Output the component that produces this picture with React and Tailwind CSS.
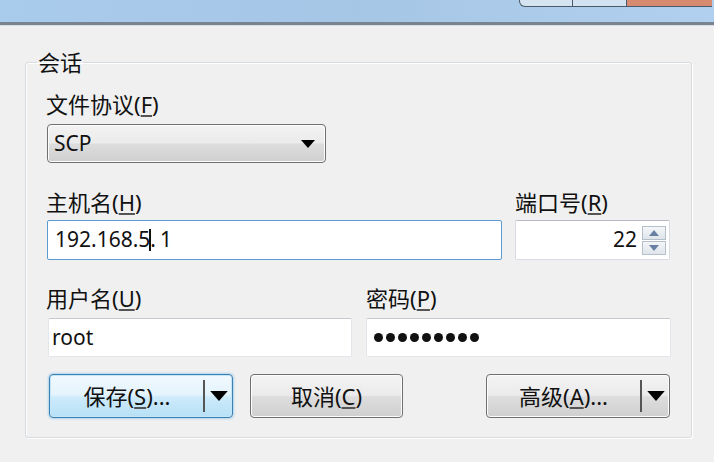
import React from "react";

const font = { fontFamily: "'Noto Sans', 'Noto Sans CJK SC', sans-serif" };

const Key = ({ k }) => (
	<span>
		(<span className="underline underline-offset-2 decoration-[#555]">{k}</span>)
	</span>
);

const Label = ({ text, k }) => (
	<div className="h-[26px] leading-[26px] text-[22px] text-[#111] whitespace-nowrap">
		{text}
		<Key k={k} />
	</div>
);

const Tri = ({ cls }) => (
	<svg className={cls} viewBox="0 0 14 8">
		<path d="M0 0 H14 L7 8 Z" fill="#000" />
	</svg>
);

const btnGray =
	"border border-[#707070] rounded-[4px] bg-[linear-gradient(#f3f3f3_0%,#ebebeb_48%,#dddddd_52%,#cfcfcf_100%)] shadow-[inset_0_0_0_1px_#fcfcfc]";
const btnBlue =
	"border border-[#3c7fb1] rounded-[4px] bg-[linear-gradient(#f1f9fe_0%,#e3f3fc_48%,#cdebfb_52%,#b7e0f6_100%)] shadow-[inset_0_0_0_1px_#c5e5f8,0_0_3px_#6ab7e8]";

const App = () => {
	return (
		<div className="w-[714px] h-[462px] overflow-hidden bg-[#f0f0f0] flex flex-col" style={font}>
			{/* title bar */}
			<div className="h-[22px] bg-[linear-gradient(90deg,#a9cbec,#a6c6e6_50%,#b1d0ef)] flex justify-end">
				<div className="flex h-[7px] mr-[2px]">
					<div className="w-[54px] border border-t-0 border-[#4a5a6a] rounded-bl-[6px] bg-[#d6e4f2]" />
					<div className="w-[53px] border-b border-[#4a5a6a] bg-[#d3e2f1]" />
					<div className="w-[86px] border-b border-l border-[#4a5a6a] bg-[#d88a70]" />
				</div>
			</div>
			<div className="h-[3px] bg-[#7a8490]" />
			<div className="h-[1px] bg-[#d8dde2]" />

			{/* group */}
			<fieldset className="ml-[25px] mt-[24px] w-[667px] h-[388px] border border-[#d5dbdf] rounded-[3px] shadow-[inset_1px_1px_0_#ffffff,1px_1px_0_#ffffff] pl-[20px] pr-[20px]">
				<legend className="ml-[-9px] px-[1px] h-[24px] leading-[24px] text-[22px] text-[#111]">会话</legend>

				<div className="mt-[17px]">
					<Label text="文件协议" k="F" />
				</div>
				<div className={`mt-[7px] ml-[1px] w-[279px] h-[39px] flex items-center justify-between pl-[6px] pr-[10px] ${btnGray}`}>
					<span className="text-[21px] text-[#111]">SCP</span>
					<Tri cls="w-[14px] h-[8px]" />
				</div>

				<div className="mt-[26px] flex">
					<div className="w-[469px]">
						<Label text="主机名" k="H" />
						<div className="mt-[5px] ml-[1px] w-[455px] h-[40px] bg-white border border-[#5b9bd2] rounded-[2px] flex items-center pl-[7px] text-[21px] text-[#111]">
							192.168.5
							<span className="inline-block w-[2px] h-[22px] bg-[#111] mx-[-1px]" />
							<span>.</span>
							<span className="ml-[4px]">1</span>
						</div>
					</div>
					<div>
						<Label text="端口号" k="R" />
						<div className="mt-[5px] w-[155px] h-[40px] bg-white border border-[#d8dde3] border-t-[#b8bcc2] rounded-[2px] flex items-center justify-end pr-[3px] text-[21px] text-[#111]">
							<span className="mr-[5px]">22</span>
							<div className="flex flex-col w-[24px] h-[29px] gap-[1px]">
								<div className="flex-1 border border-[#b5bfc9] bg-[linear-gradient(#f4f6f8,#dfe5eb)] flex items-center justify-center">
									<svg className="w-[10px] h-[6px]" viewBox="0 0 10 6"><path d="M0 6 L5 0 L10 6 Z" fill="#6a7fa4" /></svg>
								</div>
								<div className="flex-1 border border-[#b5bfc9] bg-[linear-gradient(#f4f6f8,#dfe5eb)] flex items-center justify-center">
									<svg className="w-[10px] h-[6px]" viewBox="0 0 10 6"><path d="M0 0 L10 0 L5 6 Z" fill="#6a7fa4" /></svg>
								</div>
							</div>
						</div>
					</div>
				</div>

				<div className="mt-[25px] flex">
					<div className="w-[320px]">
						<Label text="用户名" k="U" />
						<div className="mt-[7px] ml-[2px] w-[304px] h-[39px] bg-white border border-[#e2e6ea] border-t-[#c6cacf] rounded-[2px] flex items-center pl-[3px] text-[21px] text-[#111]">
							root
						</div>
					</div>
					<div>
						<Label text="密码" k="P" />
						<div className="mt-[7px] w-[305px] h-[39px] bg-white border border-[#e2e6ea] border-t-[#c6cacf] rounded-[2px] flex items-center pl-[7px] gap-[3px]">
							{Array.from({ length: 9 }).map((_, i) => (
								<span key={i} className="w-[9px] h-[9px] rounded-full bg-[#111]" />
							))}
						</div>
					</div>
				</div>

				<div className="mt-[17px] flex items-center">
					<div className={`ml-[3px] w-[184px] h-[44px] flex items-center ${btnBlue}`}>
						<span className="w-[153px] text-center text-[22px] text-[#111] pl-[1px]">
							保存<Key k="S" />...
						</span>
						<span className="w-[2px] h-[32px] bg-[#555]" />
						<span className="flex-1 flex justify-center">
							<Tri cls="w-[18px] h-[10px]" />
						</span>
					</div>
					<div className={`ml-[17px] w-[153px] h-[44px] flex items-center justify-center text-[22px] text-[#111] ${btnGray}`}>
						取消<Key k="C" />
					</div>
					<div className={`ml-[83px] w-[184px] h-[44px] flex items-center ${btnGray}`}>
						<span className="w-[153px] text-center text-[22px] text-[#111]">
							高级<Key k="A" />...
						</span>
						<span className="w-[2px] h-[32px] bg-[#555]" />
						<span className="flex-1 flex justify-center">
							<Tri cls="w-[18px] h-[10px]" />
						</span>
					</div>
				</div>
			</fieldset>
		</div>
	);
};

export default App;
